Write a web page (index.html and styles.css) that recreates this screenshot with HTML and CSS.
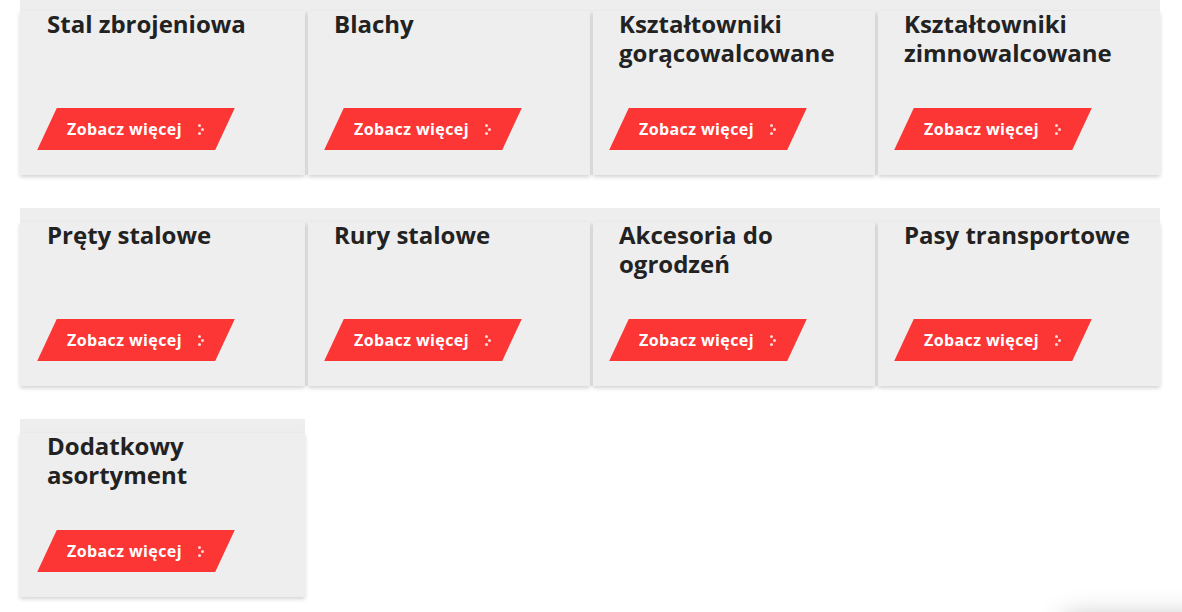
FILE: index.html
```html
<html>
<head>
    <title>Produkty</title>
    <link rel="stylesheet" href="styles.css">
</head>
<body>
    <div class="products">
        <!-- Row 1 -->
        <div class="row">
            <div class="card">
                <h3>Stal zbrojeniowa</h3>
                <a class="more" href="#"><span>Zobacz więcej</span><i class="dots"></i></a>
            </div>
            <div class="card">
                <h3>Blachy</h3>
                <a class="more" href="#"><span>Zobacz więcej</span><i class="dots"></i></a>
            </div>
            <div class="card">
                <h3>Kształtowniki gorącowalcowane</h3>
                <a class="more" href="#"><span>Zobacz więcej</span><i class="dots"></i></a>
            </div>
            <div class="card">
                <h3>Kształtowniki zimnowalcowane</h3>
                <a class="more" href="#"><span>Zobacz więcej</span><i class="dots"></i></a>
            </div>
        </div>

        <!-- Row 2 -->
        <div class="row">
            <div class="card">
                <h3>Pręty stalowe</h3>
                <a class="more" href="#"><span>Zobacz więcej</span><i class="dots"></i></a>
            </div>
            <div class="card">
                <h3>Rury stalowe</h3>
                <a class="more" href="#"><span>Zobacz więcej</span><i class="dots"></i></a>
            </div>
            <div class="card">
                <h3>Akcesoria do ogrodzeń</h3>
                <a class="more" href="#"><span>Zobacz więcej</span><i class="dots"></i></a>
            </div>
            <div class="card">
                <h3>Pasy transportowe</h3>
                <a class="more" href="#"><span>Zobacz więcej</span><i class="dots"></i></a>
            </div>
        </div>

        <!-- Row 3 -->
        <div class="row">
            <div class="card">
                <h3>Dodatkowy asortyment</h3>
                <a class="more" href="#"><span>Zobacz więcej</span><i class="dots"></i></a>
            </div>
        </div>
    </div>

    <div class="floating"></div>
</body>
</html>
```

FILE: styles.css
```css
body {
    margin: 0;
    background: #ffffff;
    font-family: 'Open Sans', 'Noto Sans', sans-serif;
    color: #222222;
    overflow: hidden;
}

.products {
    margin-top: -3px; /* page is scrolled a bit */
    padding-left: 20px;
}

.row {
    display: flex;
    gap: 3px;
    width: fit-content;
    background-color: #eeeeee;
    padding-top: 14px; /* grey band above the cards */
    margin-bottom: 33px;
}

.card {
    width: 282px;
    height: 164px;
    box-sizing: border-box;
    background-color: #eeeeee;
    box-shadow: 0 2px 4px rgba(0, 0, 0, 0.18);
    padding: 0 14px 25px 26px;
    display: flex;
    flex-direction: column;
    justify-content: space-between;
}

.card:first-child {
    width: 285px;
    padding-left: 27px;
}

.card h3 {
    margin: -2px 0 0 0;
    font-size: 24px;
    line-height: 29px;
    font-weight: 700;
    color: #222222;
}

.more {
    position: relative;
    display: flex;
    align-items: center;
    width: 178px;
    height: 42px;
    padding-left: 20px;
    box-sizing: border-box;
    color: #ffffff;
    text-decoration: none;
    font-size: 16px;
    font-weight: 700;
    letter-spacing: 0.4px;
}

/* skewed red background */
.more::before {
    content: "";
    position: absolute;
    inset: 0;
    background-color: #fc3535;
    transform: skewX(-25deg);
    z-index: 0;
}

.more span {
    position: relative;
}

.dots {
    position: relative;
    width: 6px;
    height: 11px;
    margin-left: 16px;
    margin-top: 1px;
}

.dots,
.dots::before,
.dots::after {
    display: block;
}

.dots::before,
.dots::after {
    content: "";
    position: absolute;
    width: 3px;
    height: 3px;
    border-radius: 50%;
    background-color: #ffd6d6;
}

.dots::before {
    left: 0;
    top: 0;
    box-shadow: 0 8px 0 #ffd6d6;
}

.dots::after {
    left: 3px;
    top: 4px;
}

.floating {
    position: fixed;
    left: 1065px;
    top: 618px;
    width: 220px;
    height: 60px;
    background: #ffffff;
    box-shadow: 0 0 28px rgba(0, 0, 0, 0.28);
}
```
